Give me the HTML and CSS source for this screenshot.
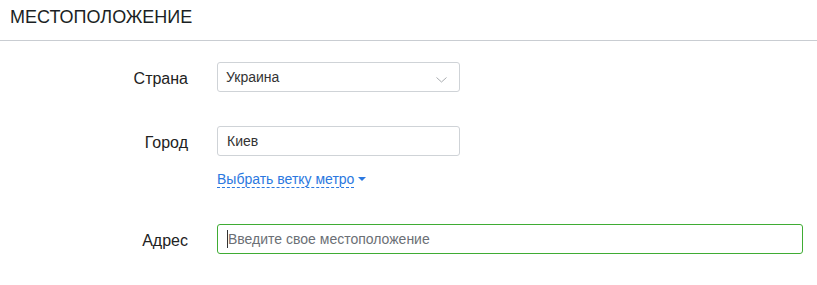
FILE: index.html
```html
<!DOCTYPE html>
<html lang="ru">
<head>
    <meta charset="UTF-8">
    <title>Местоположение</title>
    <link rel="stylesheet" href="styles.css">
</head>
<body>
    <h2 class="section-title">МЕСТОПОЛОЖЕНИЕ</h2>

    <form class="location-form">
        <div class="row row-country">
            <label class="label" for="country">Страна</label>
            <div class="select-wrap">
                <select id="country" class="field field-short">
                    <option>Украина</option>
                    <option>Россия</option>
                </select>
                <svg class="chevron" width="11" height="6" viewBox="0 0 11 6">
                    <path d="M0.5 0.5 L5.5 5 L10.5 0.5" fill="none" stroke="#a9acb0" stroke-width="1"/>
                </svg>
            </div>
        </div>

        <div class="row row-city">
            <label class="label" for="city">Город</label>
            <input type="text" id="city" class="field field-short" value="Киев">
        </div>

        <div class="row row-metro">
            <span></span>
            <a href="#" class="metro-link"><span class="dashed">Выбрать ветку метро</span><span class="caret-down"></span></a>
        </div>

        <div class="row row-address">
            <label class="label" for="address">Адрес</label>
            <div class="input-wrap">
                <input type="text" id="address" class="field field-long field-active" placeholder="Введите свое местоположение">
                <span class="text-cursor"></span>
            </div>
        </div>
    </form>
</body>
</html>
```

FILE: styles.css
```css
body { margin: 0; font-family: "Liberation Sans", Arial, sans-serif; background: #fff; color: #222; }
.section-title { margin: 0; height: 40px; padding-left: 10px; font-size: 18px; font-weight: normal; line-height: 35px; color: #1b1f24; border-bottom: 1px solid #c9cdd2; }

.location-form { padding: 21px 14px 0 0; }
.row { display: grid; grid-template-columns: 188px 1fr; column-gap: 29px; align-items: center; }
.row-city { margin-top: 34px; }
.row-metro { margin-top: 13px; line-height: 20px; }
.row-address { margin-top: 35px; }

.label { padding-top: 4px; text-align: right; font-size: 16px; color: #222; }

.field { box-sizing: border-box; height: 30px; padding: 0 9px; font-family: "Liberation Sans", Arial, sans-serif; font-size: 14px; color: #333; background: #fff; border: 1px solid #cfd3d7; border-radius: 3px; outline: none; }
.field-short { width: 243px; }
.field-long { width: 100%; }
.field-active { border-color: #3fac34; padding-left: 10px; }
.field-active::placeholder { color: #6b6f75; }

.select-wrap { position: relative; width: 243px; }
select.field { appearance: none; -webkit-appearance: none; padding-left: 8px; }
.chevron { position: absolute; right: 13px; top: 15px; pointer-events: none; }

.metro-link { font-size: 14px; color: #2b78e0; text-decoration: none; }
.dashed { border-bottom: 1px dashed #2b78e0; }
.caret-down { display: inline-block; margin-left: 4px; vertical-align: 3px; border-left: 4px solid transparent; border-right: 4px solid transparent; border-top: 4px solid #2b78e0; }

.input-wrap { position: relative; }
.text-cursor { position: absolute; left: 10px; top: 6px; width: 1px; height: 18px; background: #333; }
```
